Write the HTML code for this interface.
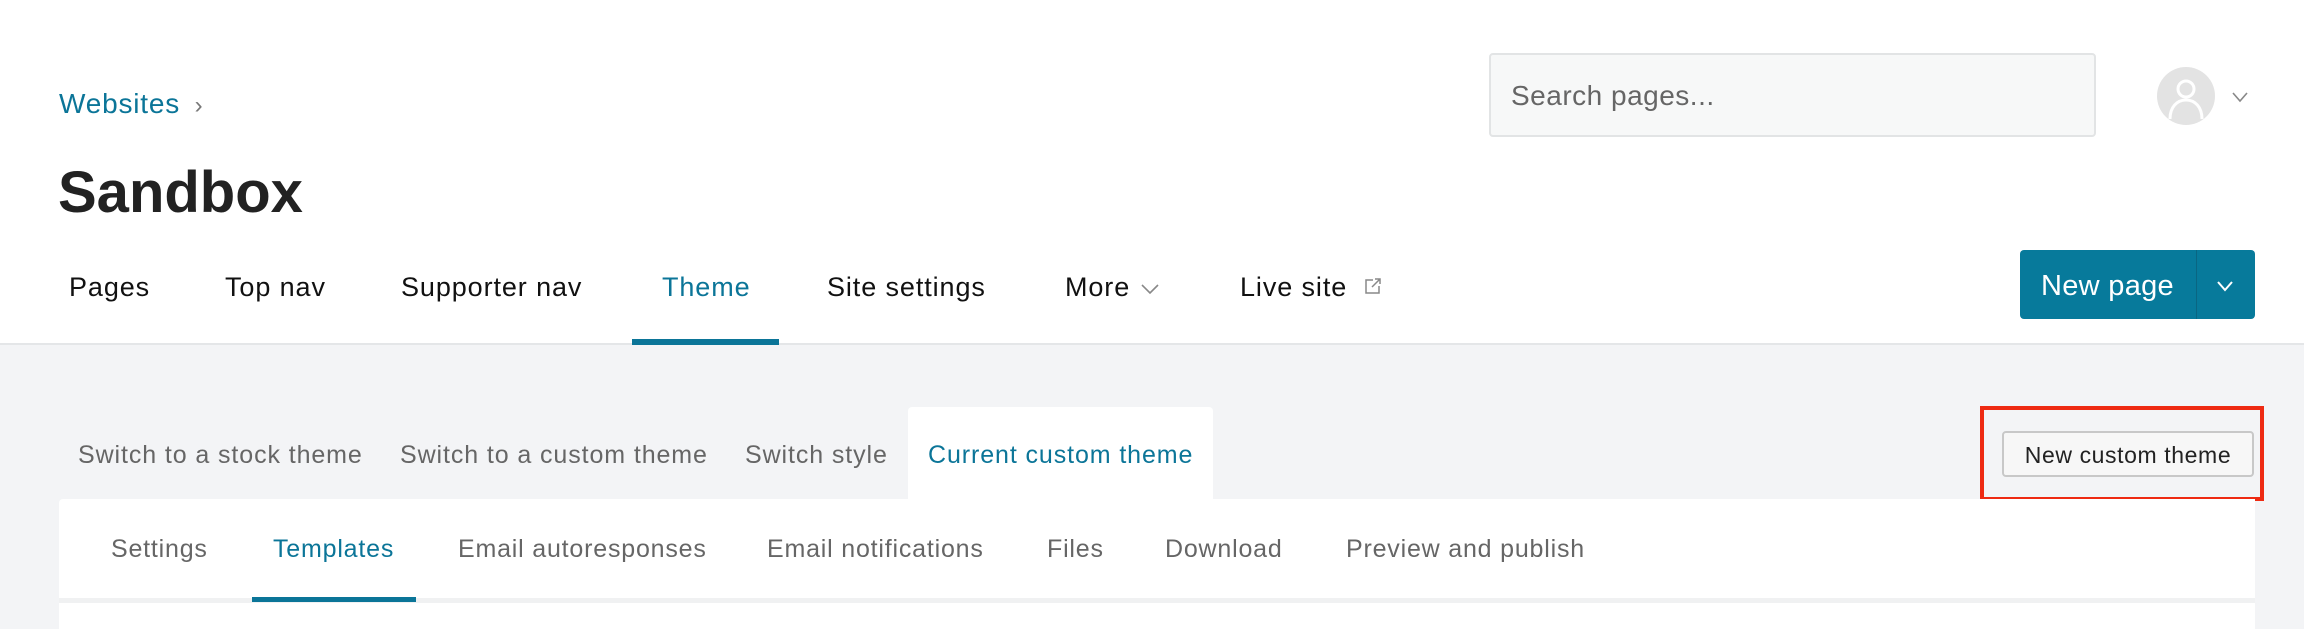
<!DOCTYPE html>
<html><head><meta charset="utf-8"><style>
*{margin:0;padding:0;box-sizing:border-box}
body{width:2304px;height:623px;overflow:hidden;background:#f3f4f6;font-family:"Liberation Sans",Arial,sans-serif;position:relative}
.hdr{position:absolute;left:0;top:0;width:2304px;height:345px;background:#fff;border-bottom:2px solid #e4e6e8}
.a{position:absolute;white-space:nowrap}
.nav{font-size:27px;letter-spacing:0.9px;color:#111;top:272px}
.sub{font-size:25px;letter-spacing:0.9px;color:#666;top:441px}
.ct{font-size:25px;letter-spacing:0.8px;color:#666;top:535px}
</style></head><body>
<div class="hdr">
<div class="a" style="left:59px;top:88px;font-size:28px;letter-spacing:0.8px;color:#0b7598">Websites <span style="color:#777;font-size:24px;margin-left:6px">&#x203A;</span></div>
<div class="a" style="left:58px;top:159px;font-size:58px;font-weight:bold;color:#222">Sandbox</div>
<div class="a nav" style="left:69px">Pages</div>
<div class="a nav" style="left:225px">Top nav</div>
<div class="a nav" style="left:401px">Supporter nav</div>
<div class="a nav" style="left:662px;color:#0b7598">Theme</div>
<div class="a nav" style="left:827px">Site settings</div>
<div class="a nav" style="left:1065px">More</div>
<svg class="a" style="left:1140px;top:283px" width="20" height="12"><path d="M2 2l8 8 8-8" fill="none" stroke="#888" stroke-width="1.6"/></svg>
<div class="a nav" style="left:1240px">Live site</div>
<svg class="a" style="left:1364px;top:277px" width="18" height="18"><path d="M9 3H2v13h13V9M8 10l8-8M11 2h5v5" fill="none" stroke="#888" stroke-width="1.5"/></svg>
<div class="a" style="left:632px;top:339px;width:147px;height:6px;background:#0b7598"></div>
<div class="a" style="left:1489px;top:53px;width:607px;height:84px;background:#f7f8f8;border:2px solid #e2e4e5;border-radius:4px"></div>
<div class="a" style="left:1511px;top:80px;font-size:28px;letter-spacing:0.5px;color:#666">Search pages...</div>
<div class="a" style="left:2157px;top:67px;width:58px;height:58px;border-radius:50%;background:#e3e3e3;overflow:hidden">
<svg width="58" height="58"><circle cx="29" cy="22" r="8" fill="none" stroke="#fff" stroke-width="3"/><path d="M13 52c0-12 7-19 16-19s16 7 16 19" fill="none" stroke="#fff" stroke-width="3"/></svg></div>
<svg class="a" style="left:2231px;top:91px" width="18" height="12"><path d="M2 2l7 8 7-8" fill="none" stroke="#888" stroke-width="1.6"/></svg>
<div class="a" style="left:2020px;top:250px;width:235px;height:69px;background:#077a9b;border-radius:4px"></div>
<div class="a" style="left:2196px;top:250px;width:1px;height:69px;background:#0a6682"></div>
<div class="a" style="left:2041px;top:270px;font-size:29px;letter-spacing:0.3px;color:#fff">New page</div>
<svg class="a" style="left:2216px;top:280px" width="18" height="12"><path d="M2 2l7 8 7-8" fill="none" stroke="#fff" stroke-width="2"/></svg>
</div>
<div class="a" style="left:908px;top:407px;width:305px;height:95px;background:#fff;border-radius:4px 4px 0 0"></div>
<div class="a sub" style="left:78px">Switch to a stock theme</div>
<div class="a sub" style="left:400px">Switch to a custom theme</div>
<div class="a sub" style="left:745px">Switch style</div>
<div class="a sub" style="left:928px;color:#0b7598">Current custom theme</div>
<div class="a" style="left:1980px;top:406px;width:284px;height:95px;border:4px solid #ee2a12"></div>
<div class="a" style="left:2002px;top:431px;width:252px;height:46px;background:#f7f7f7;border:2px solid #c8c8c8;border-radius:4px;font-size:23px;letter-spacing:0.6px;color:#222;text-align:center;line-height:44px">New custom theme</div>
<div class="a" style="left:59px;top:499px;width:2196px;height:130px;background:#fff;border-radius:4px 0 0 0"></div>
<div class="a" style="left:59px;top:598px;width:2196px;height:5px;background:#f0f1f2"></div>
<div class="a ct" style="left:111px">Settings</div>
<div class="a ct" style="left:273px;color:#0b7598">Templates</div>
<div class="a ct" style="left:458px">Email autoresponses</div>
<div class="a ct" style="left:767px">Email notifications</div>
<div class="a ct" style="left:1047px">Files</div>
<div class="a ct" style="left:1165px">Download</div>
<div class="a ct" style="left:1346px">Preview and publish</div>
<div class="a" style="left:252px;top:597px;width:164px;height:5px;background:#0b7598"></div>
</body></html>
